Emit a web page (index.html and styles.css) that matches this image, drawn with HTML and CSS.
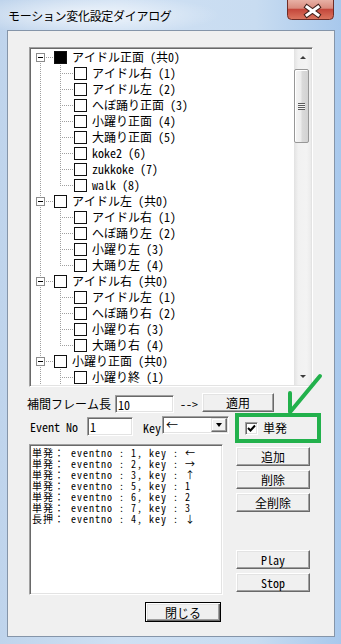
FILE: index.html
```html
<!DOCTYPE html>
<html>
<head>
    <meta charset="UTF-8">
    <title>モーション変化設定ダイアログ</title>
    <link rel="stylesheet" href="styles.css">
</head>
<body>
    <div class="window">
        <div class="titlebar">
            <span class="title">モーション変化設定ダイアログ</span>
            <span class="close-btn">
                <svg width="47" height="20" viewBox="0 0 47 20">
                    <defs>
                        <linearGradient id="cg" x1="0" y1="0" x2="0" y2="1">
                            <stop offset="0" stop-color="#e9b5aa"/>
                            <stop offset="0.45" stop-color="#d98c7e"/>
                            <stop offset="0.5" stop-color="#c4473b"/>
                            <stop offset="1" stop-color="#dc7660"/>
                        </linearGradient>
                    </defs>
                    <path d="M0.5 -1 V15.5 Q0.5 19.5 4.5 19.5 H42.5 Q46.5 19.5 46.5 15.5 V-1" fill="url(#cg)" stroke="#6e2d27"/>
                    <path d="M20 7 L31 15 M31 7 L20 15" stroke="#40201b" stroke-width="5" stroke-linecap="square"/>
                    <path d="M20 7 L31 15 M31 7 L20 15" stroke="#fff" stroke-width="3" stroke-linecap="square"/>
                </svg>
            </span>
        </div>
        <div class="client">
            <div class="tree">
                <div class="tree-rows">
                    <div class="row"><span class="cn root first"><i class="exp"></i></span><span class="chk on"></span><span class="lbl">アイドル正面 (共0)</span></div>
                    <div class="row"><span class="cn ind"></span><span class="cn tee"></span><span class="chk"></span><span class="lbl">アイドル右 (1)</span></div>
                    <div class="row"><span class="cn ind"></span><span class="cn tee"></span><span class="chk"></span><span class="lbl">アイドル左 (2)</span></div>
                    <div class="row"><span class="cn ind"></span><span class="cn tee"></span><span class="chk"></span><span class="lbl">へぼ踊り正面 (3)</span></div>
                    <div class="row"><span class="cn ind"></span><span class="cn tee"></span><span class="chk"></span><span class="lbl">小躍り正面 (4)</span></div>
                    <div class="row"><span class="cn ind"></span><span class="cn tee"></span><span class="chk"></span><span class="lbl">大踊り正面 (5)</span></div>
                    <div class="row"><span class="cn ind"></span><span class="cn tee"></span><span class="chk"></span><span class="lbl">koke2 (6)</span></div>
                    <div class="row"><span class="cn ind"></span><span class="cn tee"></span><span class="chk"></span><span class="lbl">zukkoke (7)</span></div>
                    <div class="row"><span class="cn ind"></span><span class="cn elb"></span><span class="chk"></span><span class="lbl">walk (8)</span></div>
                    <div class="row"><span class="cn root"><i class="exp"></i></span><span class="chk"></span><span class="lbl">アイドル左 (共0)</span></div>
                    <div class="row"><span class="cn ind"></span><span class="cn tee"></span><span class="chk"></span><span class="lbl">アイドル右 (1)</span></div>
                    <div class="row"><span class="cn ind"></span><span class="cn tee"></span><span class="chk"></span><span class="lbl">へぼ踊り左 (2)</span></div>
                    <div class="row"><span class="cn ind"></span><span class="cn tee"></span><span class="chk"></span><span class="lbl">小躍り左 (3)</span></div>
                    <div class="row"><span class="cn ind"></span><span class="cn elb"></span><span class="chk"></span><span class="lbl">大踊り左 (4)</span></div>
                    <div class="row"><span class="cn root"><i class="exp"></i></span><span class="chk"></span><span class="lbl">アイドル右 (共0)</span></div>
                    <div class="row"><span class="cn ind"></span><span class="cn tee"></span><span class="chk"></span><span class="lbl">アイドル左 (1)</span></div>
                    <div class="row"><span class="cn ind"></span><span class="cn tee"></span><span class="chk"></span><span class="lbl">へぼ踊り右 (2)</span></div>
                    <div class="row"><span class="cn ind"></span><span class="cn tee"></span><span class="chk"></span><span class="lbl">小躍り右 (3)</span></div>
                    <div class="row"><span class="cn ind"></span><span class="cn elb"></span><span class="chk"></span><span class="lbl">大踊り右 (4)</span></div>
                    <div class="row"><span class="cn root"><i class="exp"></i></span><span class="chk"></span><span class="lbl">小躍り正面 (共0)</span></div>
                    <div class="row"><span class="cn ind"></span><span class="cn tee"></span><span class="chk"></span><span class="lbl">小躍り終 (1)</span></div>
                </div>
                <div class="vscroll">
                    <div class="sb-btn"><i class="tri up"></i></div>
                    <div class="sb-track"><div class="thumb"><i class="grip"></i></div></div>
                    <div class="sb-btn"><i class="tri down"></i></div>
                </div>
            </div>

            <div class="ctl-row r1">
                <span class="txt l-frame">補間フレーム長</span>
                <span class="field f-frame">10</span>
                <span class="txt l-arrow">--&gt;</span>
                <span class="btn b-apply">適用</span>
            </div>

            <div class="ctl-row r2">
                <span class="txt l-event">Event No</span>
                <span class="field f-event">1</span>
                <span class="txt l-key">Key</span>
                <span class="combo">
                    <span class="combo-val">←</span>
                    <span class="combo-btn"><i class="tri down"></i></span>
                </span>
                <span class="mark">
                    <span class="cbox">
                        <svg width="9" height="9" viewBox="0 0 9 9"><path d="M1 4 L3.5 6.5 L8 1.5" fill="none" stroke="#000" stroke-width="2"/></svg>
                    </span>
                    <span class="txt">単発</span>
                </span>
            </div>

            <div class="ctl-row r3">
                <div class="list">
                    <div>単発： eventno : 1, key : ←</div>
                    <div>単発： eventno : 2, key : →</div>
                    <div>単発： eventno : 3, key : ↑</div>
                    <div>単発： eventno : 5, key : 1</div>
                    <div>単発： eventno : 6, key : 2</div>
                    <div>単発： eventno : 7, key : 3</div>
                    <div>長押： eventno : 4, key : ↓</div>
                </div>
                <div class="side">
                    <span class="btn">追加</span>
                    <span class="btn">削除</span>
                    <span class="btn">全削除</span>
                    <span class="btn b-play">Play</span>
                    <span class="btn">Stop</span>
                </div>
            </div>

            <div class="ctl-row r4">
                <span class="btn b-close">閉じる</span>
            </div>
        </div>

        <svg class="pointer" width="341" height="644" viewBox="0 0 341 644">
            <path d="M320 376 L291 411 M290 393 L290 412" fill="none" stroke="#22b14c" stroke-width="4" stroke-linecap="round"/>
        </svg>
    </div>
</body>
</html>
```

FILE: styles.css
```css
* {
    margin: 0;
    padding: 0;
    box-sizing: border-box;
}
body {
    width: 341px;
    height: 644px;
    overflow: hidden;
    font-family: "Noto Sans Mono CJK JP", "Noto Sans CJK JP", monospace;
    font-size: 12px;
    color: #000;
}
i {
    font-style: normal;
}
.window {
    position: relative;
    width: 341px;
    height: 644px;
    display: flex;
    flex-direction: column;
    background: linear-gradient(to right, #bfd4ec, #cfe0f3 35%, #c8dcf1 75%, #a8c8ec);
}
.titlebar {
    height: 30px;
    display: flex;
    align-items: flex-start;
    background: radial-gradient(ellipse 130px 20px at 90px 15px, rgba(255,255,255,.7), rgba(255,255,255,0));
}
.title {
    font-family: "Noto Sans CJK JP", sans-serif;
    font-size: 12px;
    line-height: 14px;
    margin: 9px 0 0 8px;
    letter-spacing: -0.3px;
}
.close-btn {
    margin-left: auto;
    margin-right: 7px;
    height: 20px;
}
.close-btn svg {
    display: block;
}
.client {
    flex: 1;
    margin: 0 6px 7px 7px;
    background: #f0f0f0;
    border: 1px solid #8595a9;
    display: flex;
    flex-direction: column;
}

/* sunken 3d edges */
.tree, .field, .combo, .list {
    border: 1px solid;
    border-color: #a0a0a0 #fff #fff #a0a0a0;
    box-shadow: inset 1px 1px #696969, inset -1px -1px #e3e3e3;
    background: #fff;
}

.tree {
    width: 284px;
    height: 340px;
    margin: 16px 0 0 21px;
    padding: 1px;
    display: flex;
}
.tree-rows {
    flex: 1;
    overflow: hidden;
}
.row {
    display: flex;
    align-items: center;
    height: 16px;
}
.cn {
    flex: none;
    height: 16px;
    width: 20px;
    background-repeat: no-repeat;
}
.ind {
    background-image: repeating-linear-gradient(to bottom, #a0a0a0 0 1px, transparent 1px 2px);
    background-size: 1px 16px;
    background-position: 9px 0;
}
.tee, .elb {
    width: 23px;
    background-image:
        repeating-linear-gradient(to bottom, #a0a0a0 0 1px, transparent 1px 2px),
        repeating-linear-gradient(to right, #a0a0a0 0 1px, transparent 1px 2px);
    background-size: 1px 16px, 12px 1px;
    background-position: 9px 0, 11px 8px;
}
.elb {
    background-size: 1px 9px, 12px 1px;
}
.root {
    width: 23px;
    display: flex;
    align-items: center;
    padding-left: 5px;
    background-image:
        repeating-linear-gradient(to bottom, #a0a0a0 0 1px, transparent 1px 2px),
        repeating-linear-gradient(to right, #a0a0a0 0 1px, transparent 1px 2px);
    background-size: 1px 16px, 8px 1px;
    background-position: 9px 0, 15px 8px;
}
.root.first {
    background-size: 1px 8px, 8px 1px;
    background-position: 9px 8px, 15px 8px;
}
.exp {
    width: 9px;
    height: 9px;
    border: 1px solid #8c8c8c;
    background: #fff;
    display: flex;
    align-items: center;
    justify-content: center;
}
.exp::before {
    content: "";
    width: 5px;
    height: 1px;
    background: #000;
}
.chk {
    flex: none;
    width: 13px;
    height: 13px;
    border: 1px solid #111;
    background: #fff;
}
.chk.on {
    background: #000;
}
.lbl {
    margin-left: 5px;
    white-space: nowrap;
    line-height: 16px;
}

/* scrollbar */
.vscroll {
    width: 17px;
    flex: none;
    display: flex;
    flex-direction: column;
    background: linear-gradient(to right, #e2e2e2, #f1f1f1 25%, #f3f3f3 75%, #ebebeb);
}
.sb-btn {
    height: 17px;
    display: flex;
    align-items: center;
    justify-content: center;
}
.tri {
    width: 0;
    height: 0;
    border-left: 3px solid transparent;
    border-right: 3px solid transparent;
}
.tri.up {
    border-bottom: 3px solid #3c3c3c;
}
.tri.down {
    border-top: 3px solid #3c3c3c;
}
.sb-track {
    flex: 1;
}
.thumb {
    width: 15px;
    height: 74px;
    margin: 3px 0 0 0;
    border: 1px solid #979797;
    border-radius: 2px;
    background: linear-gradient(to right, #f5f5f5, #ececec 45%, #dadada 55%, #d2d2d2);
    box-shadow: inset 1px 1px #fff;
    display: flex;
    align-items: center;
    justify-content: center;
}
.grip {
    width: 7px;
    height: 7px;
    background: repeating-linear-gradient(to bottom, #5c5c5c 0 1px, #f4f4f4 1px 2px);
}

/* controls */
.ctl-row {
    display: flex;
    align-items: flex-start;
}
.txt {
    line-height: 12px;
    white-space: nowrap;
}
.field {
    line-height: 12px;
    padding: 3px 2px 0;
}
.btn {
    display: flex;
    align-items: center;
    justify-content: center;
    height: 19px;
    background: #f0f0f0;
    border: 1px solid;
    border-color: #fff #696969 #696969 #fff;
    box-shadow: inset -1px -1px #a0a0a0, inset 1px 1px #e3e3e3;
    line-height: 12px;
    padding-top: 1px;
}

.r1 {
    height: 20px;
    margin-top: 6px;
    padding-left: 19px;
}
.l-frame {
    margin-top: 5px;
}
.f-frame {
    width: 59px;
    height: 18px;
    margin: 2px 0 0 4px;
}
.l-arrow {
    margin: 5px 0 0 6px;
}
.b-apply {
    width: 72px;
    margin-left: 4px;
}

.r2 {
    height: 30px;
    padding-left: 22px;
}
.l-event {
    margin-top: 8px;
}
.f-event {
    width: 46px;
    height: 19px;
    margin: 4px 0 0 9px;
}
.l-key {
    margin: 9px 0 0 10px;
}
.combo {
    width: 67px;
    height: 18px;
    margin: 3px 0 0 1px;
    padding: 1px;
    display: flex;
}
.combo-val {
    flex: 1;
    line-height: 12px;
    padding: 1px 0 0 2px;
}
.combo-btn {
    width: 16px;
    background: #f0f0f0;
    border: 1px solid;
    border-color: #e3e3e3 #696969 #696969 #e3e3e3;
    box-shadow: inset -1px -1px #a0a0a0, inset 1px 1px #fff;
    display: flex;
    align-items: center;
    justify-content: center;
}
.combo-btn .tri {
    border-left-width: 3.5px;
    border-right-width: 3.5px;
    border-top: 4px solid #000;
}
.mark {
    width: 86px;
    height: 30px;
    margin-left: 6px;
    border: 4px solid #22b14c;
    display: flex;
    align-items: center;
    padding-left: 6px;
}
.cbox {
    width: 13px;
    height: 13px;
    border: 1px solid;
    border-color: #a0a0a0 #fff #fff #a0a0a0;
    box-shadow: inset 1px 1px #696969, inset -1px -1px #e3e3e3;
    background: #fff;
    display: flex;
    align-items: center;
    justify-content: center;
}
.cbox svg {
    display: block;
}
.mark .txt {
    margin-left: 5px;
}

.r3 {
    margin-top: 1px;
}
.list {
    width: 194px;
    height: 151px;
    margin-left: 21px;
    padding: 2px 0 0 2px;
    font-size: 10px;
    letter-spacing: 1px;
    line-height: 11px;
    overflow: hidden;
}
.list div {
    white-space: pre;
    height: 11px;
}
.side {
    width: 74px;
    margin-left: 13px;
    padding-top: 3px;
    display: flex;
    flex-direction: column;
    gap: 4px;
}
.b-play {
    margin-top: 34px;
}

.r4 {
    margin-top: 7px;
    padding-left: 137px;
}
.b-close {
    width: 76px;
    height: 20px;
    border: 1px solid #000;
    box-shadow: inset 1px 1px #fff, inset -1px -1px #696969, inset -2px -2px #a0a0a0, inset 2px 2px #e3e3e3;
}

.pointer {
    position: absolute;
    left: 0;
    top: 0;
    pointer-events: none;
}
```
